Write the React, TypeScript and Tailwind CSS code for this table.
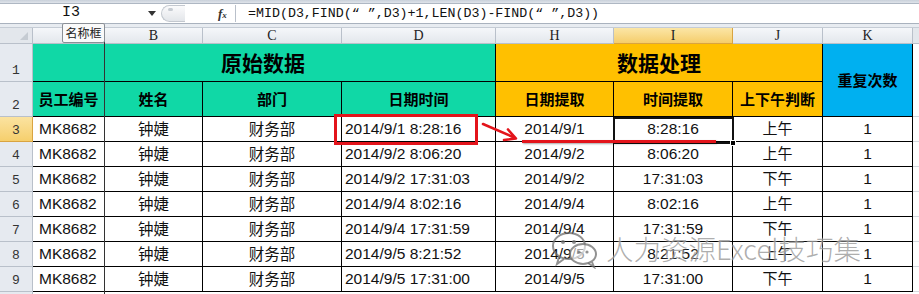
import React from "react";

const cjk = "font-['Noto_Sans_CJK_SC','Microsoft_YaHei',sans-serif]";
const data = "font-['Liberation_Sans','Noto_Sans_CJK_SC',sans-serif]";
const mono = "font-['Liberation_Mono','Noto_Sans_CJK_SC',monospace]";

type Row = { n: string; d: string; date: string; time: string; ap: string };
const rows: Row[] = [
  { n: "3", d: "2014/9/1 8:28:16", date: "2014/9/1", time: "8:28:16", ap: "上午" },
  { n: "4", d: "2014/9/2 8:06:20", date: "2014/9/2", time: "8:06:20", ap: "上午" },
  { n: "5", d: "2014/9/2 17:31:03", date: "2014/9/2", time: "17:31:03", ap: "下午" },
  { n: "6", d: "2014/9/4 8:02:16", date: "2014/9/4", time: "8:02:16", ap: "上午" },
  { n: "7", d: "2014/9/4 17:31:59", date: "2014/9/4", time: "17:31:59", ap: "下午" },
  { n: "8", d: "2014/9/5 8:21:52", date: "2014/9/5", time: "8:21:52", ap: "上午" },
  { n: "9", d: "2014/9/5 17:31:00", date: "2014/9/5", time: "17:31:00", ap: "下午" },
];

const rowHead =
  "border-r border-b border-[#b9c0ca] bg-[#e6eaf0] flex items-end justify-center pb-[1px] text-[13px] text-[#333] " +
  mono;
const colHead =
  "border-r border-b border-[#b9c0ca] bg-gradient-to-b from-[#f5f7fa] to-[#e3e7ec] flex items-center justify-center text-[14px] text-[#222] font-['Liberation_Serif',serif]";
const cell = "border-r border-b border-black flex items-center pb-[1px] text-[15.5px] text-[#111] " + data;

export default function App() {
  return (
    <div className="relative w-[919px] h-[294px] overflow-hidden bg-white">
      {/* formula bar */}
      <div className="h-[4px] bg-gradient-to-b from-[#c9d0da] to-[#dfe4ea] border-b border-[#aeb7c3]" />
      <div className="flex h-[20px] bg-white border-b border-[#a9b2be]">
        <div className={"w-[146px] flex items-center pl-[62px] text-[15px] text-[#111] " + mono}>I3</div>
        <div className="w-[12px] flex items-center justify-center">
          <svg width="8" height="5" viewBox="0 0 8 5">
            <path d="M0 0 L8 0 L4 5 Z" fill="#333" />
          </svg>
        </div>
        <div className="w-[60px] flex items-center">
          <div className="ml-[3px] w-[24px] h-[17px] rounded-l-full border border-[#c3c8cf] bg-gradient-to-b from-[#fbfbfc] to-[#e3e6ea] border-r-0 flex items-start pl-[6px] pt-[2px]">
            <div className="w-[5px] h-[3px] rounded-full bg-[#c7ccd2]" />
          </div>
        </div>
        <div className="w-[17px] flex items-center justify-start">
          <span className="font-['Liberation_Serif',serif] italic font-bold text-[13px] text-[#333] leading-none">
            f<span className="text-[9px]">x</span>
          </span>
        </div>
        <div className="w-[1px] bg-[#b9c0ca] my-[1px]" />
        <div className={"flex-1 flex items-center pl-[12px] text-[13.3px] text-[#111] whitespace-pre " + mono}>
          =MID(D3,FIND(“ ”,D3)+1,LEN(D3)-FIND(“ ”,D3))
        </div>
      </div>
      <div className="h-[4px] bg-[#e8ecf1] border-b border-[#c5ccd5]" />

      {/* grid */}
      <div className="grid grid-cols-[33px_72px_98px_139px_154px_118px_119px_90px_90px_6px] grid-rows-[16px_38px_35px_repeat(8,25px)]">
        {/* column header row */}
        <div className="border-r border-b border-[#b9c0ca] bg-[#e3e7ec] flex items-end justify-end pr-[4px] pb-[3px]">
          <svg width="8" height="8" viewBox="0 0 8 8">
            <path d="M8 0 L8 8 L0 8 Z" fill="#c5cbd2" />
          </svg>
        </div>
        <div className={colHead + " !border-r-[#555]"}>A</div>
        <div className={colHead}>B</div>
        <div className={colHead}>C</div>
        <div className={colHead}>D</div>
        <div className={colHead}>H</div>
        <div className="border-r border-b border-[#d9a441] bg-gradient-to-b from-[#fbe6a6] to-[#f5cd6a] flex items-center justify-center text-[14px] text-[#222] font-['Liberation_Serif',serif]">
          I
        </div>
        <div className={colHead}>J</div>
        <div className={colHead}>K</div>
        <div className="border-b border-[#b9c0ca] bg-[#e3e7ec]" />

        {/* row 1 */}
        <div className={rowHead}>1</div>
        <div className="bg-[#10d8a6] border-b border-r border-black" />
        <div className={"col-span-3 bg-[#10d8a6] border-b border-r border-black flex items-center justify-center pr-[74px] text-[21px] font-bold text-black " + cjk}>
          原始数据
        </div>
        <div className={"col-span-3 bg-[#ffc000] border-b border-r border-black flex items-center justify-center text-[21px] font-bold text-black " + cjk}>
          数据处理
        </div>
        <div className={"row-span-2 bg-[#00b0f0] border-b border-r border-black flex items-center justify-center text-[15px] font-bold text-black " + cjk}>
          重复次数
        </div>
        <div className="row-span-2 border-b border-[#d4d8de]" />

        {/* row 2 */}
        <div className={rowHead}>2</div>
        {["员工编号", "姓名", "部门", "日期时间"].map((t) => (
          <div key={t} className={"bg-[#10d8a6] border-b border-r border-black flex items-center justify-center text-[15px] font-bold text-black " + cjk}>
            {t}
          </div>
        ))}
        {["日期提取", "时间提取", "上下午判断"].map((t) => (
          <div key={t} className={"bg-[#ffc000] border-b border-r border-black flex items-center justify-center text-[15px] font-bold text-black " + cjk}>
            {t}
          </div>
        ))}

        {/* data rows */}
        {rows.map((r) => (
          <React.Fragment key={r.n}>
            <div
              className={
                r.n === "3"
                  ? "border-r border-b border-[#d9a441] bg-gradient-to-b from-[#fbe3a0] to-[#f6cf6c] flex items-end justify-center pb-[1px] text-[13px] text-[#333] " + mono
                  : rowHead
              }
            >
              {r.n}
            </div>
            <div className={cell + " pl-[6px]"}>MK8682</div>
            <div className={cell + " justify-center " + cjk}>钟婕</div>
            <div className={cell + " justify-center " + cjk}>财务部</div>
            <div className={cell + " pl-[3px]"}>{r.d}</div>
            <div className={cell + " justify-center"}>{r.date}</div>
            <div className={cell + " justify-center"}>{r.time}</div>
            <div className={cell + " justify-center " + cjk + " text-[15px]"}>{r.ap}</div>
            <div className={cell + " justify-center"}>1</div>
            <div className="border-b border-[#d4d8de]" />
          </React.Fragment>
        ))}
        {/* row 10 partial */}
        <div className="border-r border-[#b9c0ca] bg-[#e6eaf0]" />
        <div className="col-span-8" />
        <div />
      </div>

      {/* freeze pane line */}
      <div className="absolute left-[104px] top-[28px] w-[1px] h-[266px] bg-[#333]" />

      {/* name box tooltip */}
      <div className={"absolute left-[62px] top-[23px] w-[43px] h-[20px] border border-[#8a8f96] bg-[#fafafa] rounded-[2px] flex items-center justify-center text-[12px] text-[#222] " + cjk}>
        名称框
      </div>

      {/* selected cell I3 */}
      <div className="absolute left-[613px] top-[117px] w-[121px] h-[27px] border-2 border-[#111]" />
      <div className="absolute left-[730px] top-[140px] w-[6px] h-[6px] bg-black border border-white" />

      {/* red box */}
      <div className="absolute left-[334px] top-[114px] w-[144px] h-[31px] border-[3px] border-[#e3141b]" />

      {/* red arrow */}
      <svg className="absolute left-[480px] top-[120px]" width="42" height="24" viewBox="0 0 42 24">
        <line x1="3" y1="4" x2="33" y2="17" stroke="#e3141b" strokeWidth="2.6" strokeLinecap="round" />
        <path d="M24 20 L36 18.5 L28 9.5" fill="none" stroke="#e3141b" strokeWidth="2.6" strokeLinecap="round" strokeLinejoin="round" />
      </svg>

      {/* red underline */}
      <div className="absolute left-[522px] top-[140px] w-[194px] h-[3px] bg-[#e3141b] shadow-[1px_1px_2px_rgba(0,0,0,0.35)]" />

      {/* watermark */}
      <div className="absolute left-[550px] top-[229px] flex items-center gap-[4px] pointer-events-none">
        <svg width="52" height="40" viewBox="0 0 52 40">
          <g fill="none" stroke="rgba(110,110,110,0.75)" strokeWidth="2">
            <ellipse cx="19" cy="17" rx="16" ry="13" />
            <path d="M9 28 L7 35 L14 30" />
            <ellipse cx="33" cy="25" rx="13" ry="10" fill="rgba(255,255,255,0.6)" />
            <path d="M42 33 L44 38 L38 34" />
          </g>
          <g fill="rgba(110,110,110,0.75)">
            <circle cx="13" cy="13" r="2" />
            <circle cx="24" cy="13" r="2" />
            <circle cx="29" cy="23" r="1.6" />
            <circle cx="37" cy="23" r="1.6" />
          </g>
        </svg>
        <span
          className={"text-[27.5px] leading-none font-light text-[rgba(120,120,120,0.6)] [text-shadow:0_0_2px_rgba(255,255,255,0.9)] " + cjk}
        >
          人力资源Excel技巧集
        </span>
      </div>
    </div>
  );
}
